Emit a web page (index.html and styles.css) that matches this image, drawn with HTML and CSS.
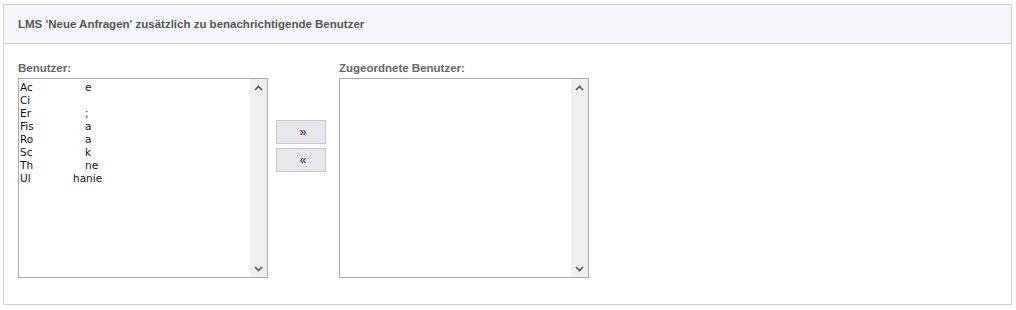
FILE: index.html
```html
<!DOCTYPE html>
<html lang="de">
<head>
    <meta charset="UTF-8">
    <title>LMS Benachrichtigung</title>
    <link rel="stylesheet" href="styles.css">
</head>
<body>
    <div class="panel">
        <div class="panel-header">LMS 'Neue Anfragen' zusätzlich zu benachrichtigende Benutzer</div>
        <div class="panel-body">
            <div class="list-col">
                <div class="list-label">Benutzer:</div>
                <div class="listbox">
                    <div class="options">
                        <div class="opt"><span class="first">Ac</span><span class="last">e</span></div>
                        <div class="opt"><span class="first">Ci</span><span class="last"></span></div>
                        <div class="opt"><span class="first">Er</span><span class="last">;</span></div>
                        <div class="opt"><span class="first">Fis</span><span class="last">a</span></div>
                        <div class="opt"><span class="first">Ro</span><span class="last">a</span></div>
                        <div class="opt"><span class="first">Sc</span><span class="last">k</span></div>
                        <div class="opt"><span class="first">Th</span><span class="last">ne</span></div>
                        <div class="opt"><span class="first">Ul</span><span class="last wide">hanie</span></div>
                    </div>
                    <div class="scrollbar">
                        <svg width="9" height="6" viewBox="0 0 9 6"><path d="M1 5 L4.5 1.5 L8 5" fill="none" stroke="#555" stroke-width="1.6"/></svg>
                        <svg width="9" height="6" viewBox="0 0 9 6"><path d="M1 1 L4.5 4.5 L8 1" fill="none" stroke="#555" stroke-width="1.6"/></svg>
                    </div>
                </div>
            </div>
            <div class="move-buttons">
                <button type="button">&raquo;</button>
                <button type="button">&laquo;</button>
            </div>
            <div class="list-col">
                <div class="list-label">Zugeordnete Benutzer:</div>
                <div class="listbox">
                    <div class="options"></div>
                    <div class="scrollbar">
                        <svg width="9" height="6" viewBox="0 0 9 6"><path d="M1 5 L4.5 1.5 L8 5" fill="none" stroke="#555" stroke-width="1.6"/></svg>
                        <svg width="9" height="6" viewBox="0 0 9 6"><path d="M1 1 L4.5 4.5 L8 1" fill="none" stroke="#555" stroke-width="1.6"/></svg>
                    </div>
                </div>
            </div>
        </div>
    </div>
</body>
</html>
```

FILE: styles.css
```css
body {
    margin: 4px 4px 0 3px;
    font-family: Arial, "Liberation Sans", sans-serif;
    background: #fff;
}
.panel {
    border: 1px solid #d2d2d2;
}
.panel-header {
    height: 38px;
    line-height: 38px;
    padding-left: 14px;
    background-color: #f5f6fa;
    border-bottom: 1px solid #d2d2d2;
    font-size: 11.5px;
    font-weight: bold;
    color: #555;
}
.panel-body {
    display: flex;
    align-items: flex-start;
    padding: 18px 14px 26px 14px;
}
.list-label {
    font-size: 11.5px;
    font-weight: bold;
    color: #666;
    height: 13px;
    line-height: 13px;
    margin-bottom: 3px;
}
.listbox {
    width: 248px;
    height: 198px;
    border: 1px solid #a9a9a9;
    display: flex;
    background: #fff;
}
.options {
    flex: 1;
    padding: 2px 0 0 1px;
    font-family: "DejaVu Sans", sans-serif;
    font-size: 10.5px;
    color: #111;
}
.opt {
    display: flex;
    height: 13px;
    line-height: 13px;
}
.opt .first {
    width: 65px;
    overflow: hidden;
}
.opt .last.wide {
    margin-left: -12px;
}
.scrollbar {
    width: 17px;
    background-color: #f0f0f0;
    display: flex;
    flex-direction: column;
    justify-content: space-between;
    align-items: center;
    padding: 6px 0 5px 0;
}
.move-buttons {
    display: flex;
    flex-direction: column;
    gap: 4px;
    margin: 58px 13px 0 8px;
}
.move-buttons button {
    width: 50px;
    height: 24px;
    background-color: #e8e8ec;
    border: 1px solid #c8c8c8;
    font-family: Arial, sans-serif;
    font-size: 12px;
    color: #222;
    padding: 0 0 0 4px;
}
```
